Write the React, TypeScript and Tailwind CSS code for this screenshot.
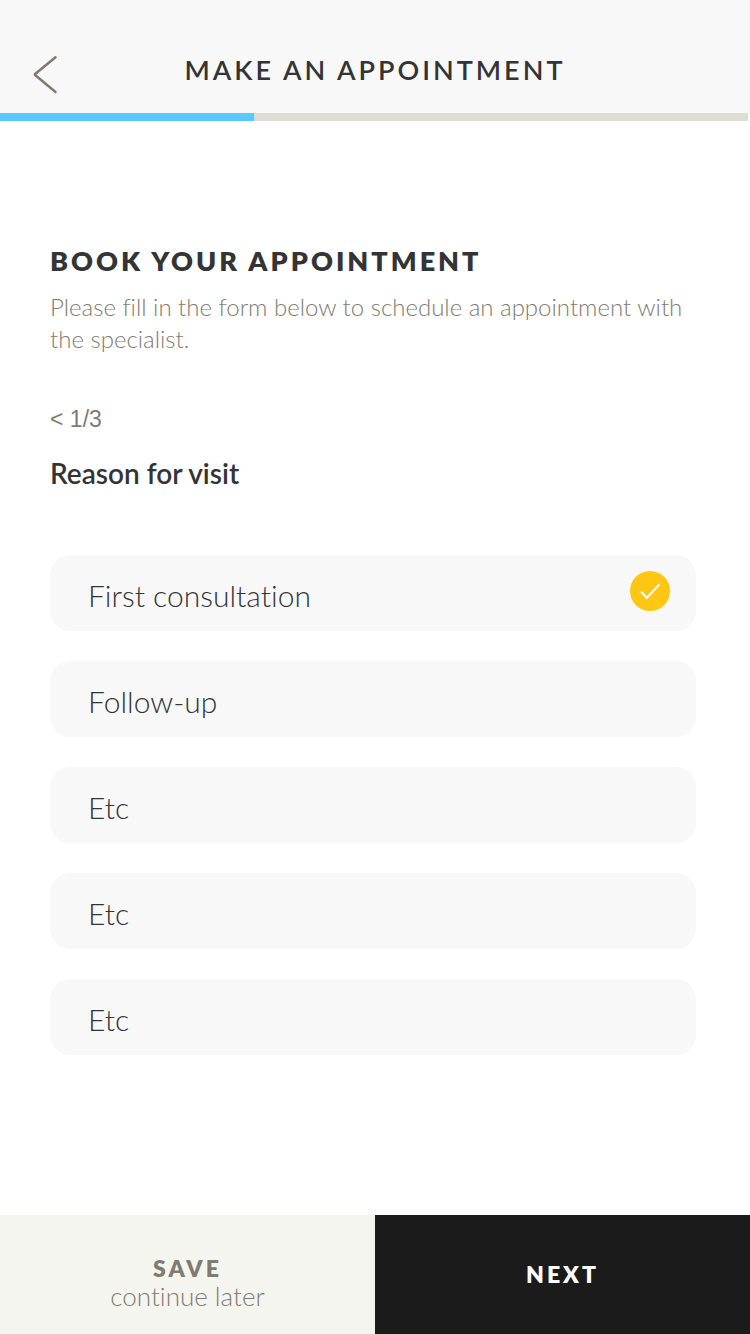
import { useState } from "react";

interface Reason {
  id: string;
  label: string;
}

const reasons: Reason[] = [
  { id: "first-consultation", label: "First consultation" },
  { id: "follow-up", label: "Follow-up" },
  { id: "etc-1", label: "Etc" },
  { id: "etc-2", label: "Etc" },
  { id: "etc-3", label: "Etc" },
];

const TOTAL_STEPS = 3;

interface ReasonOptionProps {
  reason: Reason;
  checked: boolean;
  onSelect: (id: string) => void;
}

function ReasonOption({ reason, checked, onSelect }: ReasonOptionProps) {
  return (
    <label
      htmlFor={reason.id}
      className="flex h-[76px] cursor-pointer items-start justify-between rounded-[20px] bg-[#f8f8f8] pt-4 pr-[26px] pl-[38px]"
    >
      <span className="text-[30px] leading-12 font-light text-[#333436]">
        {reason.label}
      </span>
      <span className="grid size-10 place-items-center">
        <input
          type="radio"
          id={reason.id}
          name="reason"
          checked={checked}
          onChange={() => onSelect(reason.id)}
          className="col-start-1 row-start-1 size-10 cursor-pointer appearance-none rounded-full checked:bg-[#ffc713]"
        />
        {checked && (
          <svg
            viewBox="0 0 40 40"
            fill="none"
            className="pointer-events-none col-start-1 row-start-1 size-10 stroke-white stroke-2"
          >
            <path d="M11 20.5 L16.7 27 L29.3 13.5" />
          </svg>
        )}
      </span>
    </label>
  );
}

export default function App() {
  const [selected, setSelected] = useState("first-consultation");
  const step = 1;
  const progress = Math.ceil((step / TOTAL_STEPS) * 100);

  return (
    <div className="flex min-h-screen flex-col bg-white font-['Lato',sans-serif] text-[#333436] [font-variant-ligatures:none]">
      <header>
        <div className="grid h-[113px] grid-cols-[88px_1fr_88px] items-start bg-[#f8f8f8]">
          <button
            type="button"
            aria-label="Back"
            className="cursor-pointer pt-[54px] pl-8"
          >
            <svg
              viewBox="0 0 26 40"
              fill="none"
              strokeLinecap="round"
              strokeLinejoin="bevel"
              strokeWidth="2.5"
              className="h-10 w-[26px] stroke-[#7f7b70]"
            >
              <path d="M23.5 3.2 L2.5 20.5 L23.5 38" />
            </svg>
          </button>
          <h1 className="pt-[52px] text-center text-[27px] leading-9 font-semibold tracking-[3px] uppercase">
            Make an appointment
          </h1>
        </div>
        {/* step progress */}
        <div className="mr-0.5 h-2 bg-[#dfdcd5]">
          <div className="h-2 bg-[#5bc8ff]" style={{ width: `${progress}%` }} />
        </div>
      </header>

      <main className="flex-1 px-[50px] pt-[122px] pb-10">
        <h2 className="text-[27px] leading-9 font-extrabold tracking-[3px] uppercase">
          Book your appointment
        </h2>
        <p className="mt-3 text-2xl leading-8 font-light text-[#7f7b70]">
          Please fill in the form below to schedule an appointment with the
          specialist.
        </p>

        <button
          type="button"
          className="mt-12 block cursor-pointer font-['Liberation_Sans',sans-serif] text-[23px] leading-8 text-[#7f7b70]"
        >
          &lt; {step}/{TOTAL_STEPS}
        </button>

        <fieldset className="mt-5">
          <legend className="text-[28px] leading-9 font-semibold">
            Reason for visit
          </legend>
          <div className="mt-16 mr-1 flex flex-col gap-[30px]">
            {reasons.map((reason) => (
              <ReasonOption
                key={reason.id}
                reason={reason}
                checked={selected === reason.id}
                onSelect={setSelected}
              />
            ))}
          </div>
        </fieldset>
      </main>

      <footer className="grid h-[119px] grid-cols-2">
        <button
          type="button"
          className="flex cursor-pointer flex-col items-center justify-center bg-[#f5f5f0] pt-3.5 text-[#7f7b70]"
        >
          <span className="text-[23px] leading-7 font-extrabold tracking-[3px]">
            SAVE
          </span>
          <span className="text-[26px] leading-7 font-light">
            continue later
          </span>
        </button>
        <button
          type="button"
          className="cursor-pointer bg-[#1b1b1b] text-[23px] font-extrabold tracking-[3px] text-white"
        >
          NEXT
        </button>
      </footer>
    </div>
  );
}
